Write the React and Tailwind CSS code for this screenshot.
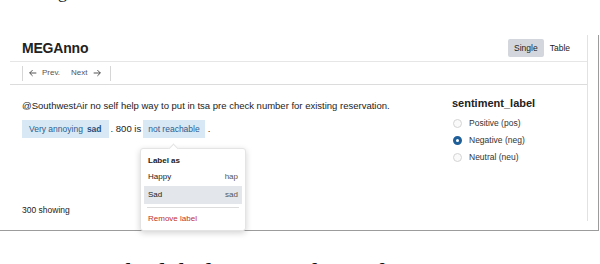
import React from "react";

const RADIOS = [
    { label: "Positive (pos)", checked: false },
    { label: "Negative (neg)", checked: true },
    { label: "Neutral (neu)", checked: false },
];

const Radio = ({ checked, label }) => (
    <div className="flex items-center gap-[7px] h-[17px]">
        {checked ? (
            <span className="w-[9px] h-[9px] rounded-full border-[3px] border-[#1e5f99] bg-white" />
        ) : (
            <span className="w-[9px] h-[9px] rounded-full border border-[#d4d4d4] bg-[#fafafa]" />
        )}
        <span className="text-[8.5px] text-[#333]">{label}</span>
    </div>
);

const App = () => {
    return (
        <div className="relative w-[600px] h-[264px] overflow-hidden bg-white" style={{ fontFamily: '"Liberation Sans", Arial, sans-serif' }}>
            {/* leftover of the line above the figure */}
            <div className="h-[32px] relative">
                <span className="absolute left-[58px] top-[-18px] text-[18px] leading-[21px] text-[#222]" style={{ fontFamily: '"Liberation Serif", serif' }}>g</span>
            </div>

            {/* figure frame */}
            <div className="w-[599px] h-[196px] border-r border-b border-[#9c9c9c]">
                <div className="ml-[10px] mt-[3px] w-[578px] h-[186px] border-r border-[#e2e2e2] flex flex-col">
                    {/* header */}
                    <div className="h-[27px] border-b border-[#e6e6e6] flex items-center justify-between pl-[12px] pr-[11px]">
                        <span className="text-[14px] font-bold text-[#222] tracking-[-0.2px]">MEGAnno</span>
                        <div className="flex items-center text-[8.5px] text-[#222]">
                            <span className="bg-[#d3d7dd] rounded-[2px] px-[6px] h-[18px] flex items-center">Single</span>
                            <span className="px-[6px]">Table</span>
                        </div>
                    </div>

                    {/* toolbar */}
                    <div className="h-[23px] border-b border-[#dcdcdc] flex items-center pl-[12px]">
                        <div className="h-[15px] border-l border-r border-[#d6d6d6] w-[89px] flex items-center gap-[11px] px-[5px] text-[8px] text-[#555]">
                            <span className="flex items-center gap-[4px]">
                                <svg width="10" height="10" viewBox="0 0 24 24" fill="none" stroke="#444" strokeWidth="2.2"><path d="M20 12H4M11 5l-7 7 7 7" /></svg>
                                Prev.
                            </span>
                            <span className="flex items-center gap-[4px]">
                                Next
                                <svg width="10" height="10" viewBox="0 0 24 24" fill="none" stroke="#444" strokeWidth="2.2"><path d="M4 12h16M13 5l7 7-7 7" /></svg>
                            </span>
                        </div>
                    </div>

                    {/* body */}
                    <div className="flex-1 flex relative">
                        <div className="w-[440px] pl-[12px] pt-[15px] flex flex-col">
                            <p className="text-[9.5px] text-[#222] leading-[12px] whitespace-nowrap">
                                @SouthwestAir no self help way to put in tsa pre check number for existing reservation.
                            </p>
                            <div className="mt-[8px] flex items-center text-[9.5px] text-[#222]">
                                <span className="bg-[#d9e8f5] h-[18px] px-[7px] flex items-center gap-[4px] text-[#2a5d8f] text-[8.5px]">
                                    Very annoying <b className="text-[#1d4f80]">sad</b>
                                </span>
                                <span className="px-[2px]">. 800 is</span>
                                <span className="bg-[#d9e8f5] h-[18px] px-[5px] flex items-center text-[#2a5d8f] text-[8.5px]">not reachable</span>
                                <span className="px-[3px]">.</span>
                            </div>
                            <p className="mt-auto mb-[4px] text-[8.5px] text-[#222]">300 showing</p>
                        </div>
                        <div className="pl-[2px] pt-[10px]">
                            <p className="text-[11px] font-bold text-[#222] mb-[3px]">sentiment_label</p>
                            <div className="pl-[1px] flex flex-col">
                                {RADIOS.map(r => (
                                    <Radio key={r.label} checked={r.checked} label={r.label} />
                                ))}
                            </div>
                        </div>
                    </div>
                </div>
            </div>

            {/* label popover */}
            <div className="absolute left-[140px] top-[148px] w-[106px] bg-white rounded-[3px] border border-[#e4e4e4] shadow-[0_2px_6px_rgba(0,0,0,0.18)] py-[4px] px-[3px] text-[8px] text-[#222] z-10">
                <span className="absolute -top-[4px] left-[29px] w-[7px] h-[7px] bg-white border-l border-t border-[#e4e4e4] rotate-45" />
                <div className="font-bold px-[4px] h-[15px] flex items-center">Label as</div>
                <div className="flex justify-between px-[4px] h-[18px] items-center">
                    <span>Happy</span><span className="text-[#555]">hap</span>
                </div>
                <div className="flex justify-between px-[4px] h-[18px] items-center bg-[#e3e6ea]">
                    <span>Sad</span><span className="text-[#555]">sad</span>
                </div>
                <div className="mx-[3px] my-[3px] border-t border-[#dcdcdc]" />
                <div className="px-[4px] h-[15px] flex items-center text-[#c0302c]">Remove label</div>
            </div>

            {/* caption, cut by the crop */}
            <p className="absolute left-[0px] top-[259px] whitespace-nowrap text-[28px] text-[#111] leading-[28px]" style={{ fontFamily: '"Liberation Serif", serif' }}>
                Figure 4: The labeling interface of MEGAnno.
            </p>
        </div>
    );
};

export default App;
